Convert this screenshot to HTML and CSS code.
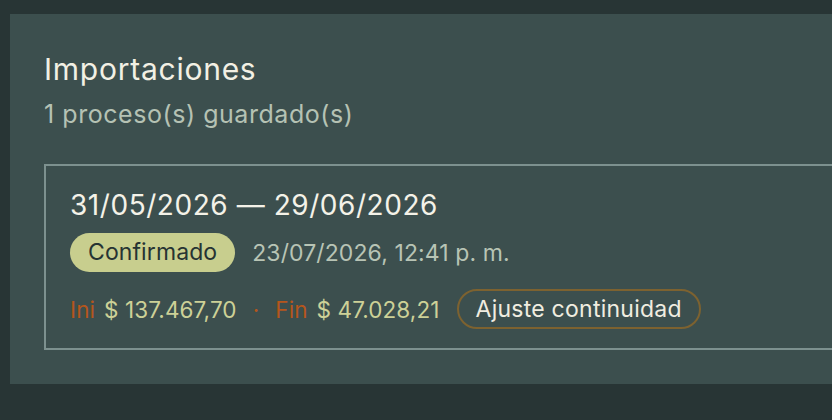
FILE: index.html
```html
<!DOCTYPE html>
<html lang="es">
<head>
<meta charset="utf-8">
<link rel="stylesheet" href="styles.css">
</head>
<body>
<main class="panel">
  <h1 class="title">Importaciones</h1>
  <p class="subtitle">1 proceso(s) guardado(s)</p>
  <section class="card">
    <h2 class="range">31/05/2026 — 29/06/2026</h2>
    <div class="meta">
      <span class="badge">Confirmado</span>
      <span class="stamp">23/07/2026, 12:41 p. m.</span>
    </div>
    <div class="totals">
      <span class="lbl">Ini</span>
      <span class="amt">$ 137.467,70</span>
      <span class="dot">·</span>
      <span class="lbl">Fin</span>
      <span class="amt">$ 47.028,21</span>
      <span class="pill">Ajuste continuidad</span>
    </div>
  </section>
</main>
</body>
</html>
```

FILE: styles.css
```css
html, body {
  margin: 0;
  padding: 0;
  background: #283535;
  overflow: hidden;
  width: 832px;
  height: 420px;
}
body {
  font-family: Inter, "Noto Sans", sans-serif;
  padding-top: 14px;
  padding-left: 10px;
  box-sizing: border-box;
}
.panel {
  background: #3c4f4e;
  width: 822px;
  height: 370px;
  box-sizing: border-box;
  padding: 37px 0 0 34px;
  overflow: hidden;
}
.title {
  margin: 0;
  font-size: 30px;
  font-weight: 430;
  line-height: 36px;
  color: #f2f0e4;
  letter-spacing: 0.75px;
}
.subtitle {
  margin: 12px 0 0;
  font-size: 25px;
  font-weight: 400;
  line-height: 30px;
  color: #b5c2b4;
  letter-spacing: 0.55px;
}
.card {
  margin-top: 35px;
  border: 2px solid #7d918f;
  border-right: none;
  height: 186px;
  box-sizing: border-box;
  padding: 22px 0 0 24px;
}
.range {
  margin: 0;
  font-size: 28px;
  font-weight: 430;
  line-height: 34px;
  color: #f4f2e8;
  letter-spacing: 0.55px;
}
.meta {
  display: flex;
  align-items: center;
  gap: 17px;
  margin-top: 11px;
}
.badge {
  background: #c8ce8e;
  color: #263333;
  font-size: 23px;
  line-height: 39px;
  height: 39px;
  padding: 0 18px;
  border-radius: 20px;
  font-weight: 430;
  letter-spacing: 0.1px;
}
.stamp {
  color: #b8c4b5;
  font-size: 23px;
  letter-spacing: 0.1px;
}
.totals {
  display: flex;
  align-items: center;
  margin-top: 17px;
  font-size: 22.5px;
  letter-spacing: 0.1px;
}
.lbl {
  color: #b5561c;
  margin-right: 9px;
}
.amt {
  color: #cdd197;
}
.dot {
  color: #b5561c;
  margin: 0 16px;
}
.pill {
  margin-left: 17px;
  border: 2px solid #7d6230;
  border-radius: 20px;
  height: 40px;
  box-sizing: border-box;
  line-height: 36px;
  padding: 0 17px;
  font-size: 23px;
  color: #f0ede0;
  font-weight: 430;
  letter-spacing: 0.25px;
}
```
